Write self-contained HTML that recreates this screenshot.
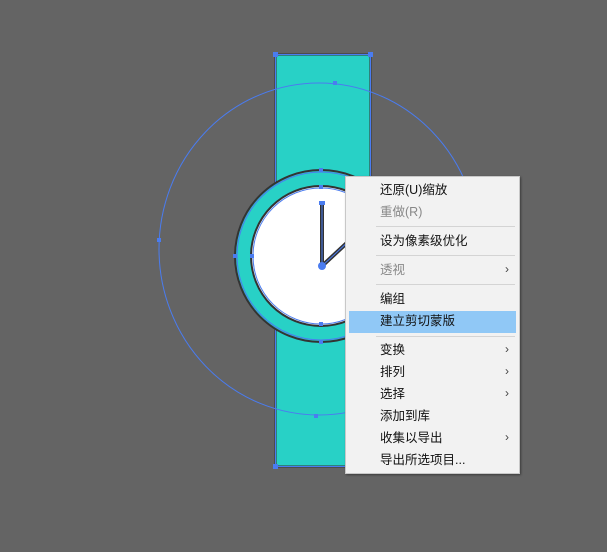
<!DOCTYPE html><html><head><meta charset="utf-8"><style>
body{margin:0;width:607px;height:552px;background:#646464;overflow:hidden;position:relative;font-family:"Liberation Sans","Noto Sans CJK SC",sans-serif}
.m{position:absolute;left:345px;top:176px;width:173px;height:296px;background:#f2f2f2;border:1px solid #c8c8c8;box-shadow:1px 1px 2px rgba(0,0,0,.4)}
.i{position:absolute;left:34px;font-size:12.5px;color:#111;line-height:16px}
.g{color:#888}
.s{position:absolute;left:30px;right:4px;height:1px;background:#d4d4d4}
.a{position:absolute;right:10px;font-size:12px;color:#444}
.h{position:absolute;left:3px;right:3px;top:134px;height:22px;background:#90c8f6}
</style></head><body>
<svg width="607" height="552" style="position:absolute;left:0;top:0">
<rect x="275.5" y="54.5" width="95" height="412" fill="#28d1c6" stroke="#333" stroke-width="2"/>
<rect x="275.5" y="54.5" width="95" height="412" fill="none" stroke="#4a7cf0" stroke-width="1"/>
<circle cx="321" cy="256" r="86" fill="#28d1c6" stroke="#333" stroke-width="2"/>
<circle cx="321" cy="256" r="84" fill="none" stroke="#4a7cf0"/>
<circle cx="321" cy="256" r="70" fill="#fff" stroke="#333" stroke-width="2"/>
<circle cx="321" cy="256" r="68" fill="none" stroke="#4a7cf0"/>
<line x1="322" y1="203" x2="322" y2="267" stroke="#333" stroke-width="4"/>
<line x1="322" y1="203" x2="322" y2="267" stroke="#4a7cf0" stroke-width="1"/>
<line x1="322" y1="266" x2="350" y2="240" stroke="#333" stroke-width="4"/>
<line x1="322" y1="266" x2="350" y2="240" stroke="#4a7cf0" stroke-width="1"/>
<circle cx="322" cy="266" r="4" fill="#4a7cf0"/>
<ellipse cx="319" cy="249" rx="160" ry="166" fill="none" stroke="#4a7cf0" stroke-width="1"/>
<g fill="#4a7cf0">
<rect x="273" y="52" width="5" height="5"/><rect x="368" y="52" width="5" height="5"/><rect x="273" y="464" width="5" height="5"/>
<rect x="333" y="81" width="4" height="4"/><rect x="157" y="238" width="4" height="4"/><rect x="314" y="414" width="4" height="4"/>
<rect x="319" y="168" width="4" height="4"/><rect x="319" y="185" width="4" height="4"/><rect x="319" y="322" width="4" height="4"/><rect x="319" y="340" width="4" height="4"/>
<rect x="233" y="254" width="4" height="4"/><rect x="250" y="254" width="4" height="4"/><rect x="319" y="201" width="6" height="4"/>
</g>
</svg>
<div class="m">
<div class="i" style="top:5px">还原(U)缩放</div>
<div class="i g" style="top:27px">重做(R)</div>
<div class="s" style="top:49px"></div>
<div class="i" style="top:56px">设为像素级优化</div>
<div class="s" style="top:78px"></div>
<div class="i g" style="top:85px">透视</div><div class="a g" style="top:85px">›</div>
<div class="s" style="top:107px"></div>
<div class="i" style="top:114px">编组</div>
<div class="h"></div>
<div class="i" style="top:136px">建立剪切蒙版</div>
<div class="s" style="top:159px"></div>
<div class="i" style="top:165px">变换</div><div class="a" style="top:165px">›</div>
<div class="i" style="top:187px">排列</div><div class="a" style="top:187px">›</div>
<div class="i" style="top:209px">选择</div><div class="a" style="top:209px">›</div>
<div class="i" style="top:231px">添加到库</div>
<div class="i" style="top:253px">收集以导出</div><div class="a" style="top:253px">›</div>
<div class="i" style="top:275px">导出所选项目...</div>
</div>
</body></html>
